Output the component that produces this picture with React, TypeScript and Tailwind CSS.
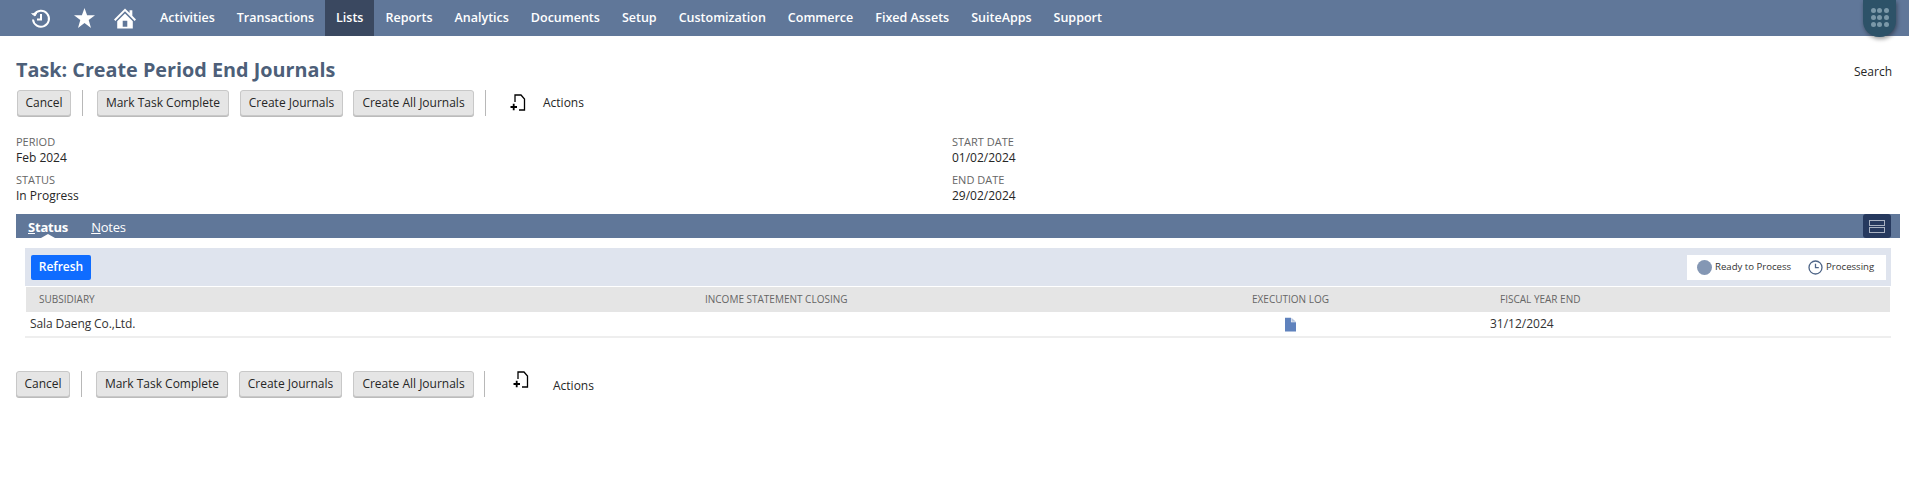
const navItems = [
  { label: "Activities" },
  { label: "Transactions" },
  { label: "Lists", active: true },
  { label: "Reports" },
  { label: "Analytics" },
  { label: "Documents" },
  { label: "Setup" },
  { label: "Customization" },
  { label: "Commerce" },
  { label: "Fixed Assets" },
  { label: "SuiteApps" },
  { label: "Support" },
];

function RecentIcon() {
  return (
    <svg width="22" height="24" viewBox="0 0 22 24" fill="none" stroke="white" strokeWidth="2">
      <path d="M4.2 8.5a8 8 0 1 1-1.2 5" />
      <path d="M1.5 7.5l3.5 2.5 2-3.5" fill="white" strokeWidth="1" />
      <path d="M11 8v5.5h-4" />
    </svg>
  );
}

function StarIcon() {
  return (
    <svg width="21" height="20" viewBox="0 0 21 20" fill="white">
      <path d="M10.500 0l2.600 7.300H21l-6.300 4.700 2.300 8-6.500-4.900L4 20l2.300-8L0 7.300h7.900z" />
    </svg>
  );
}

function HomeIcon() {
  return (
    <svg width="22" height="21" viewBox="0 0 24 22" fill="white">
      <path d="M12 0L0 12l1.500 1.600L12 3.200l10.500 10.400L24 12l-4-4V2h-3v3z" />
      <path d="M12 5.500L3.500 14v8h17v-8zM9.500 13.500h5V20h-5z" fillRule="evenodd" />
    </svg>
  );
}

function ActionsIcon() {
  return (
    <svg width="16" height="18" viewBox="0 0 16 18" fill="none" stroke="black" strokeWidth="1.300">
      <path d="M5 8V1h6l3.500 4v11H9" />
      <path d="M0.500 13h6.500M3.700 9.700v6.600" strokeWidth="1.800" />
    </svg>
  );
}

function Btn({ label, className = "" }: { label: string; className?: string }) {
  return (
    <button className={`h-[26px] bg-[#e5e5e5] border border-[#c8c8c8] rounded-[3px] text-[12px] text-[#262626] whitespace-nowrap shadow-[0_1px_0_#bbb] ${className}`}>
      {label}
    </button>
  );
}

function Sep() {
  return <div className="w-px h-[26px] bg-[#b8b8b8]" />;
}

function Field({ label, value }: { label: string; value: string }) {
  return (
    <div className="h-[38px]">
      <div className="text-[11px] leading-[15px] text-[#666] h-[16px]">{label}</div>
      <div className="text-[12px] leading-[16px] text-[#262626]">{value}</div>
    </div>
  );
}

export default function App() {
  return (
    <div className="w-[1909px] h-[485px] bg-white overflow-hidden font-['Open_Sans',sans-serif]">
      {/* Top nav */}
      <nav className="relative flex items-center h-[36px] bg-[#607799]">
        <div className="flex items-center w-[149px] pl-[30px] shrink-0">
          <RecentIcon />
          <div className="ml-[22px]">
            <StarIcon />
          </div>
          <div className="ml-[19px]">
            <HomeIcon />
          </div>
        </div>
        {navItems.map((item) => (
          <div
            key={item.label}
            className={`h-full flex items-center px-[11px] text-[12.5px] font-semibold text-white whitespace-nowrap ${
              item.active ? "bg-[#3a4860]" : ""
            }`}
          >
            {item.label}
          </div>
        ))}
        <div className="absolute left-[1863px] top-0 w-[33px] h-[37px] bg-[#2d5268] rounded-b-[16px] shadow-[1px_2px_4px_rgba(0,0,0,0.4)] grid grid-cols-3 gap-x-[2px] gap-y-[2px] content-start justify-center pt-[8px] px-[8px]">
          {Array.from({ length: 9 }).map((_, i) => (
            <span key={i} className="w-[5px] h-[5px] rounded-full bg-[#7b98a8]" />
          ))}
        </div>
      </nav>

      {/* Header */}
      <div className="flex items-center justify-between h-[21px] mt-[23px] pl-[16px] pr-[17px]">
        <h1 className="text-[19.8px] font-bold text-[#4d5f79] leading-none">Task: Create Period End Journals</h1>
        <span className="text-[12px] text-[#262626] mt-[5px]">Search</span>
      </div>

      {/* Top buttons */}
      <div className="flex items-center h-[26px] mt-[10px] pl-[17px]">
        <Btn label="Cancel" className="w-[54px]" />
        <div className="ml-[11px] mr-[14px]"><Sep /></div>
        <Btn label="Mark Task Complete" className="w-[132px]" />
        <Btn label="Create Journals" className="ml-[11px] w-[103px]" />
        <Btn label="Create All Journals" className="ml-[10px] w-[121px]" />
        <div className="ml-[11px] mr-[24px]"><Sep /></div>
        <ActionsIcon />
        <span className="ml-[17px] text-[12px] text-[#262626]">Actions</span>
      </div>

      {/* Fields */}
      <div className="grid grid-cols-[936px_1fr] mt-[18px] pl-[16px]">
        <div>
          <Field label="PERIOD" value="Feb 2024" />
          <Field label="STATUS" value="In Progress" />
        </div>
        <div>
          <Field label="START DATE" value="01/02/2024" />
          <Field label="END DATE" value="29/02/2024" />
        </div>
      </div>

      {/* Tabs */}
      <div className="relative flex items-center h-[24px] ml-[16px] mr-[9px] mt-[4px] pt-[3px] bg-[#607799] text-[13px] text-white pl-[12px]">
        <span className="font-bold tracking-[-0.2px]">
          <span className="underline">S</span>tatus
        </span>
        <span className="ml-[23px] tracking-[-0.2px]">
          <span className="underline">N</span>otes
        </span>
        <div className="absolute left-[25px] bottom-0 w-0 h-0 border-x-[7px] border-x-transparent border-b-[4px] border-b-white" />
        <div className="absolute right-[9px] top-0 w-[28px] h-[24px] bg-[#26395e] rounded-[3px] flex flex-col items-center justify-center gap-[1px]">
          <span className="w-[16px] h-[6px] border border-[#a9b2c2]" />
          <span className="w-[16px] h-[6px] border border-[#a9b2c2]" />
        </div>
      </div>

      {/* Status panel */}
      <div className="ml-[25px] mr-[18px] mt-[10px]">
        <div className="flex items-center justify-between h-[38px] bg-[#dfe4ee] pl-[6px] pr-[5px]">
          <button className="w-[60px] h-[25px] bg-[#0f6cff] rounded-[2px] text-[12px] font-semibold text-white">Refresh</button>
          <div className="flex items-center w-[199px] h-[25px] bg-white pl-[10px] text-[9.6px] text-[#333] whitespace-nowrap">
            <span className="w-[15px] h-[15px] rounded-full bg-[#8497b4] shrink-0" />
            <span className="ml-[3px]">Ready to Process</span>
            <svg className="ml-[17px] shrink-0" width="15" height="15" viewBox="0 0 15 15" fill="none" stroke="#4f6587" strokeWidth="1.300">
              <circle cx="7.500" cy="7.500" r="6.500" />
              <path d="M7.500 3.700v4h3.300" />
            </svg>
            <span className="ml-[3px]">Processing</span>
          </div>
        </div>
        <div className="border-b-2 border-[#eee] pl-px pr-[1px] pt-px">
          <div className="grid grid-cols-[666px_560px_236px_1fr] items-center h-[25px] bg-[#e5e5e5] text-[10px] text-[#666]">
            <span className="pl-[13px]">SUBSIDIARY</span>
            <span className="pl-[13px]">INCOME STATEMENT CLOSING</span>
            <span>EXECUTION LOG</span>
            <span className="pl-[12px]">FISCAL YEAR END</span>
          </div>
          <div className="grid grid-cols-[666px_560px_236px_1fr] items-center h-[24px] text-[12px] text-[#333]">
            <span className="pl-[4px] tracking-[-0.1px]">Sala Daeng Co.,Ltd.</span>
            <span />
            <span className="pl-[33px] flex">
              <svg width="11" height="15" viewBox="0 0 12 15">
                <path d="M0 0h6.500v5H12v10H0z" fill="#5f82bd" />
                <path d="M7 0l5 4.500H7z" fill="#b4c3dd" />
              </svg>
            </span>
            <span className="pl-[2px]">31/12/2024</span>
          </div>
        </div>
      </div>

      {/* Bottom buttons */}
      <div className="flex items-start h-[26px] mt-[33px] pl-[16px]">
        <Btn label="Cancel" className="w-[54px]" />
        <div className="ml-[11px] mr-[14px]"><Sep /></div>
        <Btn label="Mark Task Complete" className="w-[132px]" />
        <Btn label="Create Journals" className="ml-[11px] w-[103px]" />
        <Btn label="Create All Journals" className="ml-[11px] w-[121px]" />
        <div className="ml-[10px] mr-[28px]"><Sep /></div>
        <ActionsIcon />
        <span className="ml-[24px] mt-[6px] text-[12px] text-[#262626]">Actions</span>
      </div>
    </div>
  );
}
